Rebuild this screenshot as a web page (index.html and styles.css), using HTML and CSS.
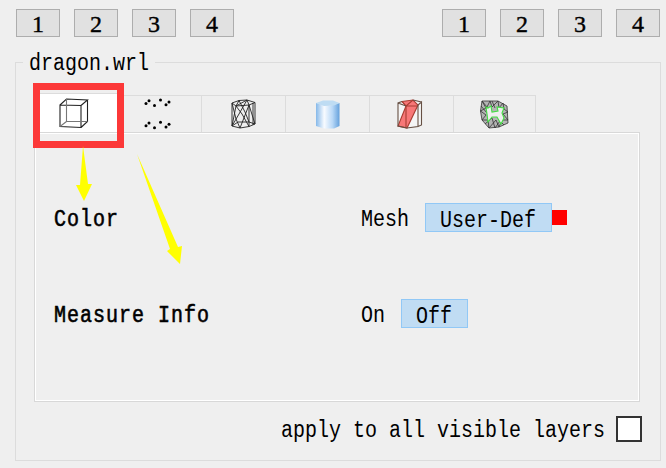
FILE: index.html
```html
<!DOCTYPE html>
<html lang="en">
<head>
<meta charset="utf-8">
<title>dragon.wrl</title>
<link rel="stylesheet" href="styles.css">
</head>
<body>
<header class="toolbar">
  <div class="group"><button>1</button><button>2</button><button>3</button><button>4</button></div>
  <div class="group"><button>1</button><button>2</button><button>3</button><button>4</button></div>
</header>
<main class="layer">
  <h1 class="legend"><span class="text">dragon.wrl</span></h1>
  <nav class="tabs">
    <div class="tab active"><svg width="30" height="31" viewBox="0 0 30 31" fill="none" stroke="#222" stroke-width="1.100"><path d="M1 7 22 7.500 22 29.500 1 28.500zM1 7 7.500 1 28.500 2 22 7.500M28.500 2V23.500L22 29.500"/><path stroke="#777" d="M7.500 1V23.500H28.500M7.500 23.500 1 28.500"/></svg></div>
    <div class="tab points"><svg width="30" height="34" viewBox="0 0 30 34"><g id="dots"><circle cx="3" cy="6.500" r="1.500"/><circle cx="6" cy="3.800" r="1.500"/><circle cx="11.500" cy="8.500" r="1.500"/><circle cx="17.500" cy="3" r="1.500"/><circle cx="23" cy="7.800" r="1.500"/><circle cx="26" cy="5" r="1.500"/></g><use href="#dots" y="22.300"/></svg></div>
    <div class="tab"><svg width="26" height="30" viewBox="0 0 26 30" fill="none" stroke="#222" stroke-width=".9"><path d="M1 4 8 1.500 16 1 24 3.500V25L18 27.500 9 29 1 27zM1 4 5 7 18 6 24 3.500M8 1.500 5 7 16 1 18 6M5 7 1 27M18 6V27.500M9 29 18 6 24 25M1 4 5 20 9 29M5 7 11 15 18 27.500M16 1 8 15 1 27M1 27 7 23 18 23 24 25M8 1.500 14 13 18 23M22 4V26"/></svg></div>
    <div class="tab"><svg width="24" height="29" viewBox="0 0 24 29"><defs><linearGradient id="blue"><stop stop-color="#85b8e9"/><stop offset=".35" stop-color="#f8fbff"/><stop offset=".7" stop-color="#b8d8f7"/><stop offset="1" stop-color="#65a1dc"/></linearGradient></defs><path fill="url(#blue)" d="M0 3V26L8 28.500H18L23.500 26V3L13 6z"/><path fill="#bedcf3" d="M0 3 7 .5H17L23.500 3 18 5.500 8 6z"/></svg></div>
    <div class="tab wedge"><svg width="26" height="30" viewBox="0 0 26 30" fill="none" stroke="#665044" stroke-width="1.100"><path fill="#f5f5f5" stroke="none" d="M1 4 15 1 24 4V26L10 29 1 27z"/><path fill="#f77777" stroke="#a83c32" d="M5 2.500 16 1 21 6 10 29 1 27 9 7z"/><path stroke="#a83c32" d="M5 2.500 9 7 16 1M9 7H21M9 7V28"/><path d="M5 2.500 1 4V27L10 29 21 27.500V6L24.500 3V26L21 27.500M16 1 24.500 3M1 4 9 7"/></svg></div>
    <div class="tab"><svg width="29" height="29" viewBox="0 0 29 29" stroke="#333" stroke-width=".8"><path fill="#b4b4b4" d="M2 1 18 1 27 6 28 23 19 27 9 28 2 20 .5 11z"/><path fill="none" d="M2 1 7 7 10 1 12 7 18 1 19 8 23 3 24 9 28 12 23 14 28 20 22 20 19 27 16 20 9 28 8 20 2 20 6 15 .5 11 6 8 2 1M12 1 15 8M5 24 12 18 15 28 20 21 24 25M1 6 7 13"/><path fill="#efefef" stroke="#4d4" stroke-width="1.100" d="M6 7 8 8 11 6 12 12 18 11 17 7 24 8 22 13 24 18 21 24 17 17H12L8 22 7 14z"/></svg></div>
  </nav>
  <section class="panel">
    <div class="row"><span class="text bold">Color</span><div class="value"><span class="text">Mesh</span><button class="option"><span class="text">User-Def</span></button><i class="swatch"></i></div></div>
    <div class="row"><span class="text bold">Measure Info</span><div class="value"><span class="text">On</span><button class="option"><span class="text">Off</span></button></div></div>
  </section>
  <label class="apply"><span class="text">apply to all visible layers</span><input type="checkbox"></label>
</main>
<div class="highlight"></div>
<svg class="arrows" width="666" height="468" fill="#ff0"><path d="M83 146 88 184 92 184 84 201 76 185 80 185z"/><path d="M137 154 178 247 182 246 180 264 167 251 170 249z"/></svg>
</body>
</html>
```
FILE: styles.css
```css
* { box-sizing: border-box; }
body {
  margin: 0;
  width: 666px;
  height: 468px;
  overflow: hidden;
  background: #efefef;
  color: #000;
  font: 20px/28px "Liberation Mono", monospace;
}
.toolbar {
  display: flex;
  justify-content: space-between;
  padding: 9px 6px 0 16px;
  height: 37px;
}
.group { display: flex; gap: 14px; }
button { margin: 0; padding: 0; font: inherit; color: inherit; }
.group button {
  width: 44px;
  height: 28px;
  padding-top: 1px;
  border: 1px solid #adadad;
  background: #e1e1e1;
  font: 24px/27px "Liberation Serif", serif;
  -webkit-text-stroke: .4px #000;
}
.text {
  display: inline-block;
  white-space: pre;
  transform: scaleY(1.16);
}
.bold { letter-spacing: 1px; -webkit-text-stroke: .5px #000; }
.layer {
  width: 646px;
  height: 399px;
  margin: 25px 0 0 15px;
  border: 1px solid #dcdcdc;
}
.legend {
  width: 132px;
  height: 28px;
  margin: -13px 0 0 7px;
  padding-left: 6px;
  background: #efefef;
  font: inherit;
}
.tabs {
  display: flex;
  align-items: flex-end;
  height: 54px;
  margin-left: 18px;
}
.tab {
  display: flex;
  justify-content: center;
  align-items: center;
  width: 84px;
  height: 37px;
  border: solid #dcdcdc;
  border-width: 1px 1px 0 0;
}
.tab:last-child { width: 82px; }
.tab.points { padding-right: 3px; }
.tab.wedge { padding-right: 3px; }
.tab.active {
  height: 39px;
  padding-right: 4px;
  background: #fff;
}
.panel {
  width: 606px;
  height: 270px;
  margin-left: 18px;
  padding: 70px 0 0 19px;
  border: 1px solid #d8d8d8;
  box-shadow: inset 0 0 0 1px #fff;
}
.row {
  display: grid;
  grid-template-columns: 307px 1fr;
  height: 96px;
}
.row > .text { height: 28px; margin-top: 3px; }
.value { display: flex; align-items: flex-start; }
.value > .text { margin: 3px 16px 0 0; }
.option {
  height: 29px;
  padding: 4px 15px 0 14px;
  border: 1px solid #91c8f6;
  background: #c0dcf3;
}
.option .text { display: block; line-height: 26px; }
.swatch { width: 15px; height: 15px; margin-top: 7px; background: #f00; }
.apply {
  display: flex;
  justify-content: flex-end;
  align-items: center;
  height: 28px;
  margin: 13px 18px 0 0;
}
.apply .text { margin-top: 3px; }
.apply input {
  appearance: none;
  width: 26px;
  height: 26px;
  margin: 0 0 0 11px;
  border: 2px solid #333;
  background: #fff;
}
.highlight {
  position: absolute;
  left: 33px;
  top: 83px;
  width: 91px;
  height: 65px;
  border: 7px solid #fc3838;
}
.arrows { position: absolute; left: 0; top: 0; pointer-events: none; }
```
